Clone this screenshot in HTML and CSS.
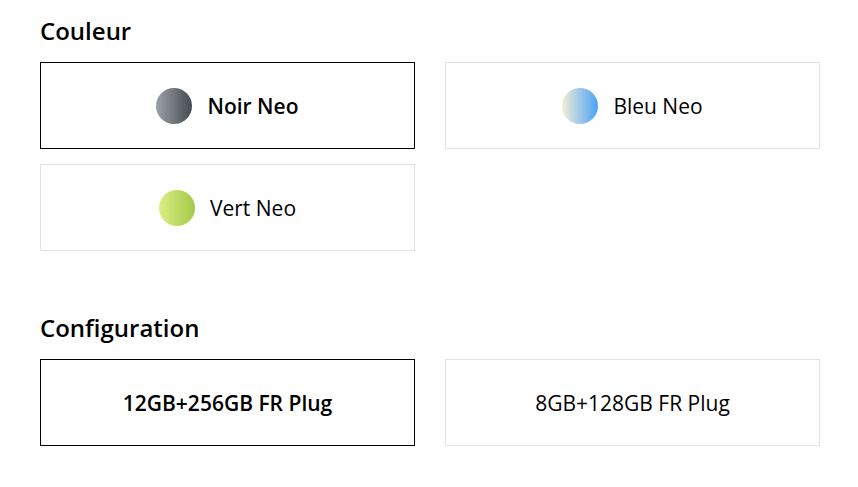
FILE: index.html
```html
<!DOCTYPE html>
<html lang="fr">
<head>
<meta charset="utf-8">
<title>Options</title>
<link rel="stylesheet" href="styles.css">
</head>
<body>
<div class="page">
  <section class="group">
    <h2 class="group-title">Couleur</h2>
    <div class="options">
      <div class="option selected">
        <span class="swatch swatch-noir"></span>
        <span class="label">Noir Neo</span>
      </div>
      <div class="option">
        <span class="swatch swatch-bleu"></span>
        <span class="label">Bleu Neo</span>
      </div>
      <div class="option">
        <span class="swatch swatch-vert"></span>
        <span class="label">Vert Neo</span>
      </div>
    </div>
  </section>
  <section class="group">
    <h2 class="group-title">Configuration</h2>
    <div class="options">
      <div class="option selected">
        <span class="label">12GB+256GB FR Plug</span>
      </div>
      <div class="option">
        <span class="label">8GB+128GB FR Plug</span>
      </div>
    </div>
  </section>
</div>
</body>
</html>
```
FILE: styles.css
```css
* { box-sizing: border-box; }
html, body { margin: 0; padding: 0; background: #fff; }
body {
  font-family: "Open Sans", "Liberation Sans", sans-serif;
  color: #000;
}
.page {
  padding: 16px 38px 0 40px;
}
.group {
  margin-bottom: 62px;
}
.group-title {
  margin: 0 0 16px;
  font-size: 24px;
  line-height: 30px;
  font-weight: 600;
}
.options {
  display: grid;
  grid-template-columns: 375px 375px;
  column-gap: 30px;
  row-gap: 15px;
}
.option {
  height: 87px;
  border: 1px solid #e3e3e3;
  display: flex;
  align-items: center;
  justify-content: center;
  gap: 15px;
  font-size: 21px;
}
.option.selected {
  border-color: #000;
}
.option.selected .label {
  font-weight: 600;
}
.swatch {
  width: 36px;
  height: 36px;
  border-radius: 50%;
  flex: none;
}
.swatch-noir { background: linear-gradient(to right, #9ba1a7, #464b51); }
.swatch-bleu { background: linear-gradient(to right, #f3eed8, #4aa2f6); }
.swatch-vert { background: linear-gradient(to right, #d9ef82, #a6c84a); }
```
